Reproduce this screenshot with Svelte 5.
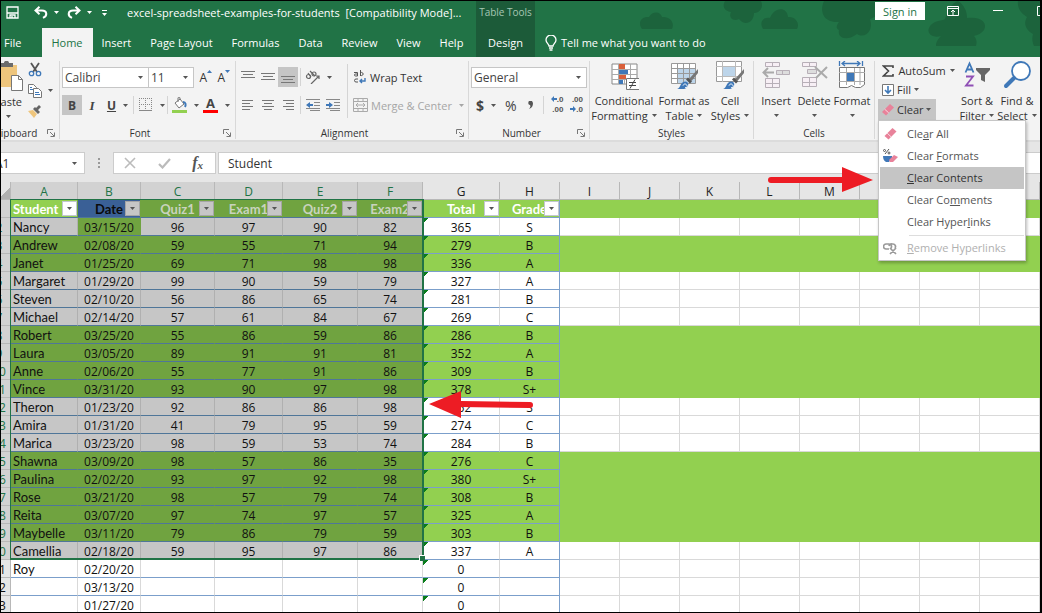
<script>
  const tabs = ['File', 'Home', 'Insert', 'Page Layout', 'Formulas', 'Data', 'Review', 'View', 'Help'];
  const heads = ['Student', 'Date', 'Quiz1', 'Exam1', 'Quiz2', 'Exam2', 'Total', 'Grade'];
  const letters = 'ABCDEFGHIJKLMNOP'.split('');
  const widths = [67, 63, 74, 68, 75, 65, 77, 60, 60, 60, 60, 60, 60, 60, 60];
  const rows = [
    ['Nancy', '03/15/20', 96, 97, 90, 82, 365, 'S'],
    ['Andrew', '02/08/20', 59, 55, 71, 94, 279, 'B'],
    ['Janet', '01/25/20', 69, 71, 98, 98, 336, 'A'],
    ['Margaret', '01/29/20', 99, 90, 59, 79, 327, 'A'],
    ['Steven', '02/10/20', 56, 86, 65, 74, 281, 'B'],
    ['Michael', '02/14/20', 57, 61, 84, 67, 269, 'C'],
    ['Robert', '03/25/20', 55, 86, 59, 86, 286, 'B'],
    ['Laura', '03/05/20', 89, 91, 91, 81, 352, 'A'],
    ['Anne', '02/06/20', 55, 77, 91, 86, 309, 'B'],
    ['Vince', '03/31/20', 93, 90, 97, 98, 378, 'S+'],
    ['Theron', '01/23/20', 92, 86, 86, 98, 362, 'S'],
    ['Amira', '01/31/20', 41, 79, 95, 59, 274, 'C'],
    ['Marica', '03/23/20', 98, 59, 53, 74, 284, 'B'],
    ['Shawna', '03/09/20', 98, 57, 86, 35, 276, 'C'],
    ['Paulina', '02/02/20', 93, 97, 92, 98, 380, 'S+'],
    ['Rose', '03/21/20', 98, 57, 79, 74, 308, 'B'],
    ['Reita', '03/07/20', 97, 74, 97, 57, 325, 'A'],
    ['Maybelle', '03/11/20', 79, 86, 79, 59, 303, 'B'],
    ['Camellia', '02/18/20', 59, 95, 97, 86, 337, 'A'],
    ['Roy', '02/20/20', '', '', '', '', 0, ''],
    ['', '03/13/20', '', '', '', '', 0, ''],
    ['', '01/27/20', '', '', '', '', 0, '']
  ];
  const green = new Set([1, 3, 4, 8, 9, 10, 11, 15, 16, 17, 18, 19]);
  const lastSelected = 20;
  const isSelected = (row, col) => row <= lastSelected && col < 6;
  let formula = $state('Student');
  let cell = $state('A1');
</script>

{#snippet caret()}
  <svg class="caret" width="5" height="3" viewBox="0 0 5 3" aria-hidden="true"><path d="M0 0h5L2.5 3z" fill="currentColor" /></svg>
{/snippet}

{#snippet launcher(name)}
  <button class="launcher" aria-label={name + ' settings'}>
    <svg width="8" height="8" viewBox="0 0 8 8" fill="none" stroke="#777"><path d="M.5 5V.5H6M3 3l4 4M7.5 3.500v4h-4" /></svg>
  </button>
{/snippet}

{#snippet lines(list)}
  <svg width="14" height="14" viewBox="0 0 14 14" stroke="#777" aria-hidden="true">
    {#each list as [x1, x2, y]}<path d="M{x1} {y}.5H{x2}" />{/each}
  </svg>
{/snippet}

{#snippet eraser()}
  <svg width="14" height="14" viewBox="0 0 14 14" aria-hidden="true">
    <path d="M1 9 9 1l4 3.500-8 8z" fill="#e8829a" /><path d="m3.600 6.100 4.100 3.800" stroke="#f9dbe2" />
  </svg>
{/snippet}

{#snippet brush()}
  <path d="M29 8 20 18l2.500 2L29 12z" fill="#777" /><path d="m19 16.500 4 4-2 2-4-4z" fill="#555" />
  <path d="M8 28c4-1 3-7 8-7.500 5 0 4 7-1 7.500z" fill="#3f78b8" /><path d="M14 24.500c1-2 3-2 4 0s-1 2.500-2 2" stroke="#fff" fill="none" />
{/snippet}

<div class="window">
  <header>
    <svg class="pattern" width="402" height="46" viewBox="0 0 402 46" fill="#1c633c" aria-hidden="true">
      <path d="M2 28c-5-7 0-13 7-12 4-7 12-5 13 0 8-1 13 6 10 12z" />
      <path d="M85 0h36c3 6-1 12-7 12 0 9-9 14-15 6-5 3-11-1-8-7-7-1-9-6-6-11z" />
      <path d="M123 28c-4-7 0-12 7-11 4-11 17-12 18-1 8-1 12 7 9 12z" />
      <path d="M184 0h50c10 4 7 15-4 18 4 12-5 20-13 15-9 7-20 5-18-4-4-2-2-5 0-8-15 1-20-10-15-21z" />
      <path d="M296 45c0-5 3-8 5-10-10 3-17-5-9-12 5-4 10-3 13-5 3-10 7-16 13-18 6 4 9 10 9 17 14-2 21 5 17 12-3 4-7 5-10 6 3 3 3 7 2 10z" />
      <path d="M378 0h24v45h-8c-2-5-2-8-1-12-9-5-9-12-6-17-5-3-10-8-9-16z" />
    </svg>

    <div class="quick">
      <button aria-label="Save"><svg width="13" height="13" viewBox="0 0 13 13" fill="none" stroke="#fff" stroke-width="1.300"><path d="M1 1h11v11H1zM1 7h11M4 12V9h5v3M6 10v2" /></svg></button>
      <button class="wide" aria-label="Undo"><svg width="14" height="13" viewBox="0 0 14 13" fill="none" stroke="#fff" stroke-width="2"><path d="M5.500.800 1.500 4.500l4 3.700M2 4.500h6c5 0 6 5 1 7.300" /></svg>{@render caret()}</button>
      <button class="wide" aria-label="Redo"><svg width="14" height="13" viewBox="0 0 14 13" fill="none" stroke="#fff" stroke-width="2"><path d="m8.500.800 4 3.700-4 3.700M12 4.500H6c-5 0-6 5-1 7.300" /></svg>{@render caret()}</button>
      <button class="more" aria-label="Customize toolbar"><svg width="5" height="6" viewBox="0 0 5 6" fill="#fff"><path d="M0 0h5v1H0zM0 3h5L2.500 6z" /></svg></button>
      <span class="title">excel-spreadsheet-examples-for-students&nbsp; [Compatibility Mode]...</span>
    </div>
    <nav class="tabs">
      {#each tabs as t}<button class:active={t === 'Home'}>{t}</button>{/each}
    </nav>
    <div class="context"><span>Table Tools</span><button>Design</button></div>
    <div class="account">
      <button class="signin">Sign in</button>
      <button aria-label="Ribbon display options"><svg width="12" height="10" viewBox="0 0 12 10" fill="none" stroke="#fff"><path d="M.5.500h11v9H.500zM.500 2.500h11M6 9V4M4 6l2-2 2 2" /></svg></button>
      <button aria-label="Minimize"><svg width="10" height="10" viewBox="0 0 10 10" stroke="#fff"><path d="M0 4.500h10" /></svg></button>
      <button aria-label="Maximize"><svg width="10" height="10" viewBox="0 0 10 10" fill="none" stroke="#fff"><path d="M.500.500h9v9h-9z" /></svg></button>
    </div>
    <button class="tell"><svg width="12" height="16" viewBox="0 0 12 16" fill="none" stroke="#fff" stroke-width="1.300"><path d="M4 11c0-2-3-3-3-6a5 5 0 0 1 10 0c0 3-3 4-3 6zM4 13h4M4.500 15h3" /></svg>Tell me what you want to do</button>
  </header>

  <div class="ribbon">
    <section class="clipboard">
      <div class="body">
        <button class="paste">
          <svg width="32" height="30" viewBox="0 0 32 30"><path d="M3 4h22v22H3z" fill="#eec57c" /><path d="M9 2h3c0-3 5-3 5 0h4v4H9z" fill="#6b6b6b" /><path d="M19.500 14.500h7l4 4v11h-11z" fill="#fff" stroke="#777" /><path d="M26.500 14.500v4h4" fill="none" stroke="#777" /></svg>
          <span>Paste</span>{@render caret()}
        </button>
        <div class="stack">
          <button aria-label="Cut"><svg width="14" height="15" viewBox="0 0 14 15" fill="none"><path d="m3 1 6 9M11 1 5 10" stroke="#555" stroke-width="1.800" /><circle cx="3.500" cy="11.500" r="2.200" stroke="#3f78b8" stroke-width="1.300" /><circle cx="10.500" cy="11.500" r="2.200" stroke="#3f78b8" stroke-width="1.300" /></svg></button>
          <button aria-label="Copy"><svg width="14" height="14" viewBox="0 0 14 14" fill="#fff" stroke="#777"><path d="M.500.500h5l3 3v6h-8z" /><path d="M5.500 4.500h5l3 3v6h-8z" /><path d="M7 8.500h4M7 10.500h5M2 3.500h2M2 5.500h3" stroke="#3f78b8" /></svg>{@render caret()}</button>
          <button aria-label="Format Painter"><svg width="14" height="13" viewBox="0 0 14 13"><path d="m0 6 5-1 4 4-3 4z" fill="#eec57c" /><path d="m5 4 5 5 2-2-2-2 3-3-2-2-3 3-1-1z" fill="#666" /></svg></button>
        </div>
      </div>
      <footer>Clipboard {@render launcher('Clipboard')}</footer>
    </section>

    <section class="font">
      <div class="body rows">
        <div class="line">
          <label class="pick name"><select aria-label="Font name"><option>Calibri</option></select>{@render caret()}</label>
          <label class="pick size"><select aria-label="Font size"><option>11</option></select>{@render caret()}</label>
          <button class="grow" aria-label="Increase font size">A<svg width="5" height="3" viewBox="0 0 5 3"><path d="M0 3h5L2.500 0z" fill="#3f78b8" /></svg></button>
          <button class="grow" aria-label="Decrease font size">A<svg width="5" height="3" viewBox="0 0 5 3"><path d="M0 0h5L2.500 3z" fill="#3f78b8" /></svg></button>
        </div>
        <div class="line">
          <button class="tool on"><b>B</b></button>
          <button class="tool"><i>I</i></button>
          <button class="tool split"><u>U</u>{@render caret()}</button>
          <hr />
          <button class="tool split" aria-label="Borders"><svg width="14" height="14" viewBox="0 0 14 14" fill="none" stroke="#888"><path d="M.500 0v13M6.500 0v13M12.500 0v13M0 .500h13M0 6.500h13" stroke-dasharray="1 1" /><path d="M0 12.500h13" /></svg>{@render caret()}</button>
          <hr />
          <button class="tool split" aria-label="Fill color"><svg width="15" height="16" viewBox="0 0 15 16" fill="none"><path d="m3 6 5-4 4 5-5 4z" fill="#fff" stroke="#777" /><path d="M6 5V1c0-1 2-1 2 0v2" stroke="#777" /><path d="M11 5c3 0 3 3 2 5" stroke="#3f78b8" stroke-width="2" /><path d="M0 13h15v3H0z" fill="#92d050" /></svg>{@render caret()}</button>
          <button class="tool split color" aria-label="Font color"><b>A</b>{@render caret()}</button>
        </div>
      </div>
      <footer class="wide-foot">Font {@render launcher('Font')}</footer>
    </section>

    <section class="align">
      <div class="body">
        <div class="rows">
          <div class="line">
            <button class="tool" aria-label="Top align">{@render lines([[0, 14, 1], [2, 12, 4], [0, 14, 7]])}</button>
            <button class="tool" aria-label="Middle align">{@render lines([[0, 14, 3], [2, 12, 6], [0, 14, 9]])}</button>
            <button class="tool on" aria-label="Bottom align">{@render lines([[0, 14, 6], [2, 12, 9], [0, 14, 12]])}</button>
            <hr />
            <button class="tool split" aria-label="Orientation"><svg width="15" height="14" viewBox="0 0 15 14" fill="none" stroke="#666" stroke-width="1.200"><circle cx="3.500" cy="6.500" r="2" /><path d="m3 3 3 4M5 1l5 5M6 14l8-8M11 6h3v3" /><circle cx="9" cy="4" r="2" /></svg>{@render caret()}</button>
          </div>
          <div class="line">
            <button class="tool" aria-label="Align left">{@render lines([[1, 12, 2], [1, 9, 5], [1, 12, 8], [1, 9, 11]])}</button>
            <button class="tool" aria-label="Center">{@render lines([[1, 13, 2], [3, 11, 5], [1, 13, 8], [3, 11, 11]])}</button>
            <button class="tool" aria-label="Align right">{@render lines([[2, 13, 2], [5, 13, 5], [2, 13, 8], [5, 13, 11]])}</button>
            <hr />
            <button class="tool" aria-label="Decrease indent"><svg width="14" height="12" viewBox="0 0 14 12"><path d="M0 .500h14M8 3.500h6M8 6.500h6M0 9.500h14M4 11.500h10" stroke="#888" /><path d="m0 6 4-3v2h3v2H4v2z" fill="#3f78b8" /></svg></button>
            <button class="tool" aria-label="Increase indent"><svg width="14" height="12" viewBox="0 0 14 12"><path d="M0 .500h14M8 3.500h6M8 6.500h6M0 9.500h14M4 11.500h10" stroke="#888" /><path d="M7 6 3 3v2H0v2h3v2z" fill="#3f78b8" /></svg></button>
          </div>
        </div>
        <hr class="tall" />
        <div class="rows">
          <div class="line"><button class="text"><svg width="14" height="14" viewBox="0 0 14 14" fill="none" stroke="#555"><path d="M1 2.500h3.500V6H2.500a1 1 0 0 1 0-2h2M7.500 0v6M7.500 3a1.500 1.500 0 1 1 0 2M5 9H3a1.500 1.500 0 0 0 0 3h2" /><path d="M12 8v3H7m2-2-2 2 2 2" stroke="#3f78b8" stroke-width="1.400" /></svg>Wrap Text</button></div>
          <div class="line"><button class="text" disabled><svg width="15" height="14" viewBox="0 0 15 14" fill="none" stroke="#aaa"><path d="M.500.500h14v13H.500zM.500 3.500h14M.500 10.500h14M5 .500v3M10 .500v3M5 10.500v3M10 10.500v3M3 7h9M5 5 3 7l2 2M10 5l2 2-2 2" /></svg>Merge &amp; Center {@render caret()}</button></div>
        </div>
      </div>
      <footer class="wide-foot">Alignment {@render launcher('Alignment')}</footer>
    </section>

    <section class="number">
      <div class="body rows">
        <div class="line"><label class="pick general"><select aria-label="Number format"><option>General</option></select>{@render caret()}</label></div>
        <div class="line">
          <button class="tool split big"><b>$</b>{@render caret()}</button>
          <button class="tool big">%</button>
          <button class="tool big" aria-label="Comma style"><svg width="5" height="8" viewBox="0 0 5 8"><path d="M1 0h3l1 2c0 3-1 5-4 6 1-1 2-3 1-4C0 4 0 1 1 0z" fill="#555" /></svg></button>
          <hr />
          <button class="dec" aria-label="Increase decimal"><span><svg width="6" height="6" viewBox="0 0 6 6"><path d="M0 3 3 0v2h3v2H3v2z" fill="#3f78b8" /></svg>.0</span><span>.00</span></button>
          <button class="dec" aria-label="Decrease decimal"><span>.00</span><span><svg width="6" height="6" viewBox="0 0 6 6"><path d="M6 3 3 0v2H0v2h3v2z" fill="#3f78b8" /></svg>.0</span></button>
        </div>
      </div>
      <footer class="wide-foot">Number {@render launcher('Number')}</footer>
    </section>

    <section class="styles">
      <div class="body">
        <button class="large">
          <svg width="30" height="30" viewBox="0 0 30 30" fill="none"><path d="M3 3h25v20H3z" fill="#fff" stroke="#888" /><path d="M9.500 3v20M15.500 3v20M21.500 3v20M3 8.500h25M3 13.500h25M3 18.500h25" stroke="#aaa" /><path d="M10 3h6v5h-6zM10 14h7v4h-7z" fill="#d9603b" /><path d="M10 9h9v4h-9zM10 19h4v4h-4z" fill="#3f78b8" /><path d="M17.500 17.500h13v11h-13z" fill="#fff" stroke="#777" /><path d="M20 21.500h7M20 24.500h7m-1-6-5 9" stroke="#444" /></svg>
          <span>Conditional</span><span>Formatting {@render caret()}</span>
        </button>
        <button class="large">
          <svg width="30" height="30" viewBox="0 0 30 30" fill="none"><path d="M2 3h24v19H2z" fill="#fff" /><path d="M8 8h18v14H8z" fill="#bdd5ea" /><path d="M2.500 2.500h24v20h-24zM8.500 3v20M14.500 3v20M20.500 3v20M2 7.500h24M2 12.500h24M2 17.500h24" stroke="#999" />{@render brush()}</svg>
          <span>Format as</span><span>Table {@render caret()}</span>
        </button>
        <button class="large">
          <svg width="30" height="30" viewBox="0 0 30 30" fill="none"><path d="M1.500.500h25v20h-25z" fill="#fff" stroke="#999" /><path d="M7.500 0v21M20.500 0v21M1 5.500h26M1 15.500h26" stroke="#bbb" /><path d="M8 6h12v9H8z" fill="#bdd5ea" />{@render brush()}</svg>
          <span>Cell</span><span>Styles {@render caret()}</span>
        </button>
      </div>
      <footer>Styles</footer>
    </section>

    <section class="cells">
      <div class="body">
        <button class="large">
          <svg width="28" height="30" viewBox="0 0 28 30" fill="#f7eff5" stroke="#b7afb7"><path d="M3.500 1.500h14v4h-14zM10.500 1.500v4M3.500 17.500h14v9h-14zM3.500 22.500h14M10.500 17.500v9" /><path d="M14.500 9.500h13v4h-13zM20.500 9.500v4" fill="#ddd" /><path d="M1 11.500h11M6 7l-4.500 4.500L6 16" stroke="#aaa" stroke-width="2" fill="none" /></svg>
          <span>Insert</span>{@render caret()}
        </button>
        <button class="large">
          <svg width="28" height="30" viewBox="0 0 28 30" fill="#f7eff5" stroke="#b7afb7"><path d="M2.500 1.500h14v4h-14zM9.500 1.500v4M2.500 16.500h14v9h-14zM2.500 21.500h14M9.500 16.500v9" /><path d="M7.500 8.500h9v4h-9z" fill="#ddd" /><path d="m15 6 12 11M27 6 16 17" stroke="#aaa" stroke-width="2" fill="none" /></svg>
          <span>Delete</span>{@render caret()}
        </button>
        <button class="large">
          <svg width="28" height="30" viewBox="0 0 28 30" fill="none"><path d="M4 2.500h18M7 0 4 2.500 7 5M19 0l3 2.500L19 5M1.500 0v5M24.500 0v5" stroke="#3f78b8" stroke-width="1.300" /><path d="M1.500 6.500h25v17l-4 3h-5l-4-2-4 2h-8z" fill="#fff" stroke="#777" /><path d="M8.500 7v17M16.500 7v17M22 7v17M1 11.500h26M1 20.500h26" stroke="#aaa" /><path d="M9 12h7v8H9z" fill="#3f78b8" /></svg>
          <span>Format</span>{@render caret()}
        </button>
      </div>
      <footer>Cells</footer>
    </section>

    <section class="editing">
      <div class="body">
        <div class="commands">
          <button><svg width="12" height="12" viewBox="0 0 12 12" fill="none" stroke="#444" stroke-width="1.600"><path d="M11 3V1H1.500L6.500 6l-5 5H11V9" /></svg><span class="grow-text">AutoSum</span>{@render caret()}</button>
          <button><svg width="12" height="12" viewBox="0 0 12 12" fill="#fff" stroke="#777"><path d="M.500.500h11v11H.500z" /><path d="M6 2v7M3 6l3 3 3-3" stroke="#3f78b8" stroke-width="1.600" fill="none" /></svg>Fill {@render caret()}</button>
          <div class="anchor">
            <button class="clear" aria-haspopup="menu" aria-expanded="true">{@render eraser()}Clear {@render caret()}</button>
            <div class="menu" role="menu">
              <button role="menuitem">{@render eraser()}<span>Cle<u>a</u>r All</span></button>
              <button role="menuitem"><svg width="15" height="14" viewBox="0 0 15 14" fill="none"><path d="m6 0-4 5" stroke="#555" /><circle cx="1.500" cy="1.500" r="1" stroke="#555" /><circle cx="6" cy="4" r="1" stroke="#555" /><path d="M0 7h9v2l-3 4H3c-2-1-3-3-3-6z" fill="#3f78b8" /><path d="m6 11 5-5 4 2-5 5H7z" fill="#e8829a" /></svg><span>Clear <u>F</u>ormats</span></button>
              <button role="menuitem" class="hover"><i></i><span><u>C</u>lear Contents</span></button>
              <button role="menuitem"><i></i><span>Clear Co<u>m</u>ments</span></button>
              <button role="menuitem"><i></i><span>Clear Hyper<u>l</u>inks</span></button>
              <div class="rule"></div>
              <button role="menuitem" disabled><svg width="15" height="13" viewBox="0 0 15 13" fill="none" stroke="#999" stroke-width="1.700"><path d="M6 7H3a2.500 2.500 0 0 1 0-5h3a2.500 2.500 0 0 1 2 4M6 4a2.500 2.500 0 0 1 3-2h1a2.500 2.500 0 0 1 2 4M7 6l6 6M13 6l-6 6" /></svg><span><u>R</u>emove Hyperlinks</span></button>
            </div>
          </div>
        </div>
        <button class="large find">
          <svg width="28" height="30" viewBox="0 0 28 30" fill="none"><path d="m2.500 11.500 4-9 4 9M4 8.500h5" stroke="#3f78b8" stroke-width="1.800" /><path d="M3 15.500h7L3 24.500h7.500" stroke="#8f4fb5" stroke-width="1.800" /><path d="M13 7h14v2l-5 5v7l-4-2v-5l-5-5z" fill="#666" /></svg>
          <span>Sort &amp;</span><span>Filter {@render caret()}</span>
        </button>
        <button class="large find">
          <svg width="28" height="30" viewBox="0 0 28 30" fill="none" stroke="#3f78b8"><circle cx="18" cy="10" r="9" fill="#fff" stroke-width="1.800" /><path d="m11 17-8 8" stroke-width="4" stroke-linecap="round" /></svg>
          <span>Find &amp;</span><span>Select {@render caret()}</span>
        </button>
      </div>
    </section>
  </div>

  <div class="formula">
    <div class="namebox"><input aria-label="Name box" bind:value={cell} />{@render caret()}</div>
    <svg class="dots" width="2" height="10" viewBox="0 0 2 10" fill="#999"><path d="M0 0h2v2H0zM0 4h2v2H0zM0 8h2v2H0z" /></svg>
    <div class="fx">
      <button aria-label="Cancel"><svg width="12" height="12" viewBox="0 0 12 12" stroke="#bbb" stroke-width="1.600"><path d="m1 1 10 10M11 1 1 11" /></svg></button>
      <button aria-label="Enter"><svg width="13" height="11" viewBox="0 0 13 11" fill="none" stroke="#bbb" stroke-width="2.200"><path d="m1 6 3.500 3.500L12 1" /></svg></button>
      <button class="fn" aria-label="Insert function">f<small>x</small></button>
    </div>
    <input class="entry" aria-label="Formula bar" bind:value={formula} />
  </div>

  <main>
    <table>
      <colgroup>
        <col style="width:23px" />
        {#each widths as w}<col style="width:{w}px" />{/each}
        <col />
      </colgroup>
      <thead>
        <tr>
          <th class="corner" aria-label="Select all"></th>
          {#each letters as l, c}<th class:sel={c < 6}>{l}</th>{/each}
        </tr>
      </thead>
      <tbody>
        <tr class="titles">
          <th class="rownum sel">1</th>
          {#each heads as h, c}
            <td class="green data" class:sel={c < 6} class:first={c === 0} class:date={c === 1} class:edge={c === 7}>
              {h}<button aria-label="Filter {h}">{@render caret()}</button>
            </td>
          {/each}
          {#each letters.slice(8) as l}<td class="green"></td>{/each}
        </tr>
        {#each rows as r, i}
          {@const n = i + 2}
          <tr>
            <th class="rownum" class:sel={n <= lastSelected}>{n}</th>
            {#each r as v, c}
              <td class="data" class:num={c > 0} class:green={green.has(n) || (n === 2 && c === 1)} class:sel={isSelected(n, c)} class:left={c === 0} class:flag={c === 6} class:edge={c === 7}>{v}</td>
            {/each}
            {#each letters.slice(8) as l}<td class:green={green.has(n)}></td>{/each}
          </tr>
        {/each}
      </tbody>
    </table>
    <div class="range"></div>
    <svg class="arrow two" width="106" height="28" viewBox="0 0 106 28" fill="#ed1c24" aria-hidden="true"><path d="m0 13 32-13v10l69 1a3 3 0 0 1 0 6l-69-1v11z" /></svg>
  </main>
  <svg class="arrow one" width="106" height="26" viewBox="0 0 106 26" fill="#ed1c24" aria-hidden="true"><path d="M3 10h71V0l31 13-31 12V16H3a3 3 0 0 1 0-6z" /></svg>
</div>

<style>
  :global(body) { margin: 0; }
  * { box-sizing: border-box; }
  .window { position: relative; height: 100vh; overflow: hidden; border: 1px solid #000; border-right-width: 2px; display: flex; flex-direction: column; font: 11px/15px "Open Sans", "Noto Sans", sans-serif; color: #333; background: #fff; }
  button { font: inherit; color: inherit; background: none; border: 0; padding: 0; margin: 0; display: flex; align-items: center; white-space: nowrap; }
  svg { flex: none; }
  hr { border: 0; border-left: 1px solid #d4d4d4; width: 1px; height: 18px; margin: 0; }
  .caret { color: #555; }

  header { position: relative; flex: none; background: #217346; color: #fff; display: grid; grid-template-columns: 475px 59px 1fr; grid-template-rows: 27px 29px; }
  .pattern { position: absolute; right: -2px; top: 0; }
  header .caret { color: #fff; }
  .quick { display: flex; align-items: center; padding: 0 0 4px 5px; white-space: nowrap; }
  .quick .wide { gap: 6px; margin-left: 15px; width: 25px; }
  .quick .wide + .wide { margin-left: 8px; }
  .more { margin: 0 20px 0 10px; }
  .tabs { grid-row: 2; display: flex; }
  .tabs button { padding: 0 10px 0 9px; }
  .tabs button:first-child { padding-left: 3px; margin-right: 11px; }
  .context { grid-column: 2; grid-row: 1 / 3; background: #1c5b39; display: grid; grid-template-rows: 27px 29px; justify-items: center; }
  .tabs .active { background: #f3f3f3; color: #217346; }
  .context span { color: #a6c7b4; font-size: 10px; line-height: 23px; }
  .account { position: relative; display: flex; align-items: flex-start; justify-content: flex-end; gap: 34px; margin-right: -7px; }
  .account button { margin-top: 5px; }
  .account .signin { background: #fff; color: #217346; padding: 0 8px; height: 18px; margin: 1px -12px 0 0; }
  .tell { grid-column: 3; grid-row: 2; position: relative; padding-left: 10px; gap: 4px; }

  .ribbon { flex: none; display: flex; height: 83px; background: #f3f3f3; position: relative; z-index: 2; }
  section { flex: none; display: flex; flex-direction: column; position: relative; border-right: 1px solid #d8d8d8; margin: 4px 0 1px; }
  .body { display: flex; flex: 1; }
  footer { display: flex; justify-content: center; align-items: center; font-size: 10px; height: 12px; }
  .wide-foot { padding-right: 15px; }
  .launcher { position: absolute; right: 4px; bottom: 2px; }
  .rows { display: flex; flex-direction: column; gap: 8px; padding-top: 6px; }
  .line { display: flex; align-items: center; height: 20px; }
  .clipboard { width: 59px; overflow: hidden; }
  .clipboard .body { margin-left: -10px; }
  .clipboard footer { justify-content: flex-start; margin-left: -9px; }
  .paste { flex-direction: column; width: 34px; gap: 3px; }
  .paste svg:last-child { margin-top: 3px; }
  .stack { display: flex; flex-direction: column; gap: 6px; padding: 1px 0 0 3px; }
  .stack button { gap: 6px; height: 15px; }
  .font { width: 176px; }
  .font .rows, .number .rows { padding-left: 2px; }
  .pick { display: flex; align-items: center; border: 1px solid #c6c6c6; background: #fff; height: 21px; padding-right: 5px; }
  .pick select { flex: 1; min-width: 0; appearance: none; border: 0; background: none; font: inherit; font-size: 12px; color: #444; padding: 0 0 0 2px; }
  .name { width: 87px; }
  .size { width: 45px; border-left: 0; }
  .grow { width: 18px; align-items: flex-start; justify-content: flex-end; font-size: 12px; }
  .tool { width: 20px; height: 20px; justify-content: center; font-size: 13px; color: #444; }
  .tool i { font-family: "Liberation Serif", serif; font-weight: bold; }
  .split { width: 31px; gap: 7px; }
  .font .tool b, .font .tool u { font-weight: bold; font-size: 12px; }
  .font hr { margin: 0 2px 0 0; }
  .font .color b { border-bottom: 3px solid #f00; line-height: 13px; width: 15px; font-size: 13px; }
  .on { background: #c5c5c5; }
  .align { width: 233px; }
  .align .body { padding-left: 2px; }
  .align .line hr { margin: 0 2px; }
  .align .rows:first-child { width: 109px; }
  .tall { height: 54px; margin-top: 3px; }
  .align .rows:last-child { padding-left: 5px; }
  .text { gap: 3px; }
  .text:disabled, .text:disabled .caret { color: #a6a6a6; }
  .text .caret { margin-left: 4px; }
  .number { width: 121px; }
  .general { width: 116px; }
  .big { font-size: 14px; }
  .number hr { margin: 0 6px 0 3px; }
  .dec { flex-direction: column; align-items: flex-end; width: 20px; padding-right: 6px; font: bold 8px/10px "Liberation Sans", sans-serif; color: #555; }
  .large { flex-direction: column; align-items: center; }
  .large > svg:first-child { margin-bottom: 2px; }
  .large span { display: flex; align-items: center; gap: 4px; }
  .cells .large > .caret { margin-top: 6px; }
  .styles { width: 164px; }
  .styles .body { display: grid; grid-template-columns: 68px 52px 40px; }
  .cells { width: 121px; }
  .cells .body { display: grid; grid-template-columns: 38px 38px 38px; padding-left: 3px; }
  .editing { border: 0; }
  .commands { display: flex; flex-direction: column; width: 82px; padding-left: 3px; }
  .commands button { height: 19px; gap: 3px; padding-left: 4px; }
  .grow-text { width: 50px; }
  .anchor { position: relative; }
  .anchor .clear { background: #c5c5c5; width: 58px; height: 21px; gap: 2px; padding-left: 3px; }
  .menu { position: absolute; left: 0; top: 100%; width: 148px; padding: 2px 1px 1px; background: #fff; border: 1px solid #c6c6c6; box-shadow: 1px 2px 3px #0004; color: #555; }
  .anchor .menu button { width: 100%; height: 22px; gap: 9px; padding-left: 3px; line-height: 16px; }
  .menu svg, .menu i { width: 15px; flex: none; }
  .menu .hover { background: #c5c5c5; color: #333; }
  .menu button:disabled { color: #b0b0b0; }
  .rule { border-top: 1px solid #ddd; margin: 2px 0 1px 29px; }
  .find { width: 40px; }

  .formula { flex: none; height: 42px; padding: 11px 0 9px; border-top: 2px solid #dcdcdc; background: #e6e6e6; display: flex; align-items: center; }
  .formula input { border: 0; background: none; font: inherit; font-size: 12px; color: #333; min-width: 0; }
  .namebox { display: flex; align-items: center; width: 91px; margin-left: -7px; height: 22px; background: #fff; border: 1px solid #ccc; padding-right: 7px; }
  .namebox input { flex: 1; padding: 0; }
  .dots { margin: 0 13px; }
  .fx { display: flex; align-items: center; justify-content: space-between; width: 103px; height: 22px; background: #fff; border: 1px solid #ccc; padding: 0 12px 0 10px; margin-right: 2px; }
  .fn { font: italic bold 16px/18px "Liberation Serif", serif; color: #555; }
  .fn small { font-size: 11px; padding-top: 4px; }
  .formula .entry { flex: 1; height: 22px; background: #fff; border: 1px solid #ccc; border-right: 0; padding: 0 9px; }

  main { position: relative; flex: 1; min-height: 0; overflow: hidden; }
  table { width: calc(100% + 13px); margin-left: -13px; table-layout: fixed; border-collapse: separate; border-spacing: 0; font: 13px/15px Lato, "Open Sans", sans-serif; color: #111; }
  th, td { height: 18px; padding: 2px 0 0; text-align: center; white-space: nowrap; overflow: hidden; border-right: 1px solid #d9d9d9; border-bottom: 1px solid #d9d9d9; font-weight: normal; }
  thead th { background: #e6e6e6; border-color: #b8b8b8; color: #222; }
  .num, thead th, .rownum { font-family: "Open Sans", "Noto Sans", sans-serif; font-size: 12px; }
  th.sel { background: #d2d2d2; color: #217346; }
  .corner { background: linear-gradient(135deg, #e6e6e6 70%, #b0b0b0 70%); }
  .rownum { background: #e6e6e6; border-color: #b8b8b8; }
  td.green { background: #92d050; border-color: #92d050; }
  td.sel { background: #c6c6c6; border-right-color: #b0b0b0; }
  td.sel.green { background: #70a340; border-right-color: #70a340; }
  td.data { border-bottom-color: #7b9fcb; }
  td.data.sel { border-bottom-color: #4f7699; }
  td.data.edge { border-right-color: #7b9fcb; }
  .left { text-align: left; padding-left: 2px; }
  .flag, td.green.flag { background-image: linear-gradient(135deg, #0a7d1c 4px, transparent 4px); }
  .titles td { position: relative; color: #fff; font-weight: bold; }
  .titles td.sel { color: #c9d3be; }
  .titles td.first { text-align: left; padding-left: 2px; background: #92d050; color: #fff; }
  .titles td.date { background: #3a6096; color: #0b0b0b; }
  .titles button { position: absolute; right: 0; top: 1px; width: 15px; height: 15px; justify-content: center; background: #fff; border: 1px solid #c2c8d0; }
  .titles .sel:not(.first) button { background: #c6c6c6; border-color: #a5a5a5; }
  .range { position: absolute; left: 9px; top: 17px; width: 414px; height: 361px; border: 2px solid #217346; border-width: 1px 2px 2px 1px; pointer-events: none; }
  .range::after { content: ""; position: absolute; right: -3px; bottom: -3px; width: 5px; height: 5px; background: #217346; border: 1px solid #fff; border-width: 1px 0 0 1px; }
  .arrow { position: absolute; pointer-events: none; }
  .one { left: 767px; top: 166px; z-index: 3; }
  .two { left: 428px; top: 209px; }
</style>
